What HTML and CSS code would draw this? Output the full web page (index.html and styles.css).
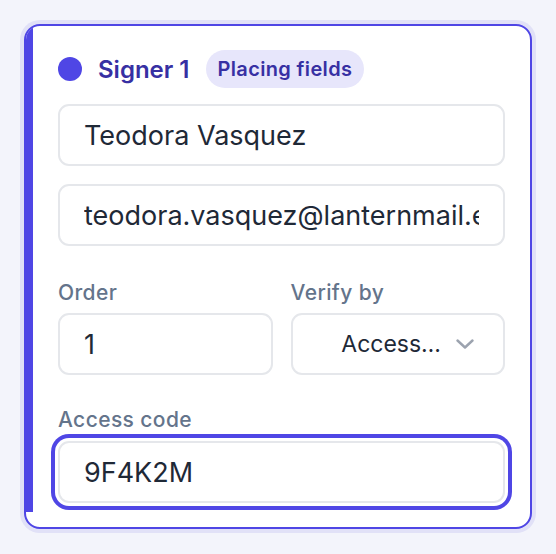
FILE: index.html
```html
<!DOCTYPE html>
<html lang="en">
<head>
    <meta charset="UTF-8">
    <meta name="viewport" content="width=device-width, initial-scale=1.0">
    <title>Signer</title>
    <link rel="stylesheet" href="styles.css">
</head>
<body>

    <div class="card">
        <div class="card-body">
            <!-- Header -->
            <div class="signer-head">
                <span class="dot"></span>
                <span class="signer-name">Signer 1</span>
                <span class="badge">Placing fields</span>
            </div>

            <input class="field name-field" type="text" value="Teodora Vasquez">
            <input class="field email-field" type="text" value="teodora.vasquez@lanternmail.example">

            <div class="row">
                <div class="col">
                    <label class="label">Order</label>
                    <input class="field" type="text" value="1">
                </div>
                <div class="col">
                    <label class="label">Verify by</label>
                    <div class="field select">
                        <span class="select-text">Access…</span>
                        <svg class="chevron" width="18" height="10" viewBox="0 0 18 10">
                            <path d="M1.5 1.5 L9 8.5 L16.5 1.5" fill="none" stroke="#9ca3af" stroke-width="2.4" stroke-linecap="round" stroke-linejoin="round"/>
                        </svg>
                    </div>
                </div>
            </div>

            <!-- Access code -->
            <label class="label code-label">Access code</label>
            <input class="field focused" type="text" value="9F4K2M">
        </div>
    </div>

</body>
</html>
```

FILE: styles.css
```css
body {
    margin: 0;
    padding: 24px;
    background-color: #f3f4fb;
    font-family: Inter, "Noto Sans", sans-serif;
}

.card {
    background-color: #fff;
    border: 2px solid #4f46e5;
    border-radius: 16px;
    box-shadow: 0 0 0 4px #e1e1f7;
    overflow: hidden;
    padding-bottom: 15px;
}

.card-body {
    border-left: 7px solid #4f46e5;
    padding: 24px 25px 9px 25px;
    display: flex;
    flex-direction: column;
}

.signer-head {
    display: flex;
    align-items: center;
    height: 38px;
    margin-bottom: 16px;
}

.dot {
    width: 24px;
    height: 24px;
    border-radius: 50%;
    background-color: #4f46e5;
    margin-right: 16px;
}

.signer-name {
    font-size: 24px;
    font-weight: 600;
    color: #3730a3;
    margin-right: 16px;
}

.badge {
    height: 38px;
    line-height: 38px;
    padding: 0 12px;
    border-radius: 19px;
    background-color: #e7e6fb;
    color: #3730a3;
    font-size: 20px;
    font-weight: 600;
    letter-spacing: 0.35px;
}

.field {
    box-sizing: border-box;
    width: 100%;
    height: 62px;
    border: 2px solid #e5e7eb;
    border-radius: 11px;
    padding: 0 24px;
    font-family: Inter, "Noto Sans", sans-serif;
    font-size: 27px;
    color: #1f2937;
    background-color: #fff;
    outline: none;
}

.name-field {
    margin-bottom: 18px;
}

.email-field {
    margin-bottom: 35px;
}

.row {
    display: grid;
    grid-template-columns: 1fr 1fr;
    gap: 18px;
    margin-bottom: 33px;
}

.col {
    display: flex;
    flex-direction: column;
}

.label {
    font-size: 21px;
    line-height: 24px;
    font-weight: 500;
    letter-spacing: 0.4px;
    color: #64748b;
    margin-bottom: 8px;
}

.code-label {
    margin-bottom: 9px;
}

.select {
    display: flex;
    align-items: center;
    justify-content: flex-end;
    gap: 15px;
    padding-right: 29px;
}

.select-text {
    white-space: nowrap;
    font-size: 23px;
}

.focused {
    box-shadow: 0 0 0 3px #fff, 0 0 0 7px #4f46e5;
}
```
